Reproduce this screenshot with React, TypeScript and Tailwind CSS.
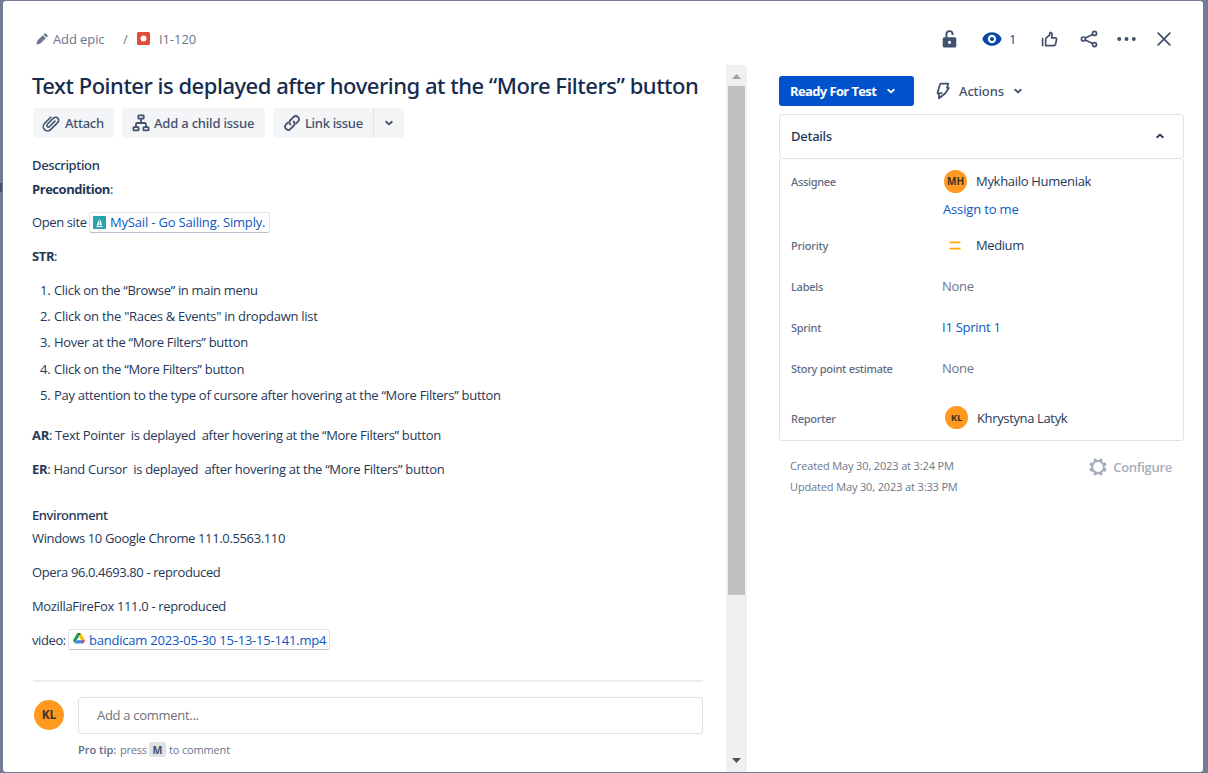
import type { ReactNode } from "react";

const steps = [
  { text: "Click on the “Browse” in main menu", track: "tracking-[-0.33px]" },
  { text: "Click on the \"Races & Events\" in dropdawn list", track: "tracking-[-0.27px]" },
  { text: "Hover at the “More Filters” button", track: "tracking-[-0.3px]" },
  { text: "Click on the “More Filters” button", track: "tracking-[-0.27px]" },
  { text: "Pay attention to the type of cursore after hovering at the “More Filters” button", track: "tracking-[-0.3px]" },
];

function Chevron({ up = false, className = "" }: { up?: boolean; className?: string }) {
  return (
    <svg width="10" height="10" viewBox="0 0 10 10" fill="none" stroke="currentColor" strokeWidth="1.9" strokeLinecap="round" strokeLinejoin="round" className={className}>
      <path d={up ? "M2.200 6.200 5 3.600l2.800 2.600" : "M2.200 3.800 5 6.400l2.800-2.600"} />
    </svg>
  );
}

function PencilIcon() {
  return (
    <svg width="12" height="12" viewBox="0 0 12 12" fill="#6b778c">
      <path d="M1.400 7.600 6.800 2.200l3 3-5.400 5.400-3.400.8a.35.35 0 0 1-.5-.5zM7.500 1.500l.8-.8a1.300 1.300 0 0 1 1.800 0l1.200 1.200a1.300 1.300 0 0 1 0 1.800l-.8.8z" />
    </svg>
  );
}

function BugIcon() {
  return (
    <svg width="13" height="13" viewBox="0 0 13 13">
      <rect width="13" height="13" rx="1.5" fill="#e04b3a" />
      <circle cx="6.5" cy="6.5" r="3" fill="#fff" />
    </svg>
  );
}

function ClipIcon() {
  return (
    <svg width="18" height="18" viewBox="0 0 18 18" fill="none" stroke="currentColor" strokeWidth="1.6" strokeLinecap="round">
      <path d="M12.900 7.100 7.500 12.500a1.500 1.500 0 0 1-2.200-2.200l6.200-6.200a3 3 0 0 1 4.300 4.300l-7.200 7.200a4.300 4.300 0 0 1-6.100-6.100l6.300-6.300" />
    </svg>
  );
}

function TreeIcon() {
  return (
    <svg width="18" height="18" viewBox="0 0 18 18" fill="none" stroke="currentColor" strokeWidth="1.8" strokeLinejoin="round">
      <rect x="6.300" y="1.400" width="5.400" height="3.200" rx=".6" />
      <rect x="1.400" y="13.200" width="5.200" height="3.200" rx=".6" />
      <rect x="11.400" y="13.200" width="5.200" height="3.200" rx=".6" />
      <path d="M9 4.600V9M4 13V10.200Q4 9 5.200 9h7.600Q14 9 14 10.200V13" />
    </svg>
  );
}

function LinkIcon() {
  return (
    <svg width="18" height="18" viewBox="0 0 18 18" fill="none" stroke="currentColor" strokeWidth="1.8" strokeLinecap="round">
      <path d="M7.400 10.600a3.300 3.300 0 0 1 .1-4.600l3.200-3.200a3.200 3.200 0 0 1 4.500 4.500l-2 2" />
      <path d="M10.600 7.400a3.300 3.300 0 0 1-.1 4.600l-3.200 3.200a3.200 3.200 0 0 1-4.500-4.500l2-2" />
    </svg>
  );
}

function UnlockIcon() {
  return (
    <svg width="15" height="18" viewBox="0 0 15 18">
      <path d="M4.400 8V4.400a3.100 3.100 0 0 1 6.200-.3v.8" fill="none" stroke="#42526e" strokeWidth="1.900" />
      <path fillRule="evenodd" fill="#42526e" d="M2.200 7.200h10.600a1.500 1.500 0 0 1 1.500 1.500v7.200a1.500 1.500 0 0 1-1.500 1.500H2.200a1.500 1.500 0 0 1-1.500-1.500V8.700a1.500 1.500 0 0 1 1.500-1.500zM7.500 10.700a1.600 1.600 0 1 0 0 3.200 1.600 1.600 0 0 0 0-3.200z" />
    </svg>
  );
}

function EyeIcon() {
  return (
    <svg width="20" height="14" viewBox="0 0 20 14">
      <path d="M10 .2C5 .2 1.900 3.500.7 6a2 2 0 0 0 0 2C1.900 10.500 5 13.800 10 13.800S18.100 10.500 19.300 8a2 2 0 0 0 0-2C18.100 3.500 15 .2 10 .2z" fill="#0747a6" />
      <circle cx="10" cy="7" r="3.100" fill="none" stroke="#fff" strokeWidth="2.100" />
    </svg>
  );
}

function ThumbIcon() {
  return (
    <svg width="17" height="17" viewBox="0 0 17 17" fill="none" stroke="#42526e" strokeWidth="1.700" strokeLinecap="round" strokeLinejoin="round">
      <path d="M1.600 7.700v7M4.700 14.600V8.200q0-.8.6-1.300L8.600 4l.2-1.600Q9 1.300 9.900 1.500q1.300.3 1.200 2L10.600 6.800h3.600q1.600 0 1.300 1.600l-.9 4.700q-.3 1.500-1.800 1.500z" />
    </svg>
  );
}

function ShareIcon() {
  return (
    <svg width="18" height="18" viewBox="0 0 18 18" fill="none" stroke="#42526e" strokeWidth="1.700">
      <circle cx="3.400" cy="9" r="2" />
      <circle cx="14.500" cy="3.400" r="2" />
      <circle cx="14.500" cy="14.600" r="2" />
      <path d="m5.300 8.100 7.300-3.700M5.300 9.900l7.300 3.700" />
    </svg>
  );
}

function BoltIcon() {
  return (
    <svg width="14" height="18" viewBox="0 0 14 18" fill="none" stroke="#42526e" strokeWidth="1.800" strokeLinejoin="round">
      <path d="M5.200 1.700h7.100L11 5.700l1.700.3L9.400 11.300 3 16.300V11.600L1.500 11.300 3.600 3.400Q4 1.700 5.200 1.700zM3 11.600l3.300-.8" />
    </svg>
  );
}

function GearIcon() {
  const teeth = [22.5, 67.5, 112.5, 157.5, 202.5, 247.5, 292.5, 337.5];
  return (
    <svg width="18" height="18" viewBox="0 0 18 18">
      <circle cx="9" cy="9" r="5.900" fill="none" stroke="#a5adba" strokeWidth="2" />
      {teeth.map((a) => (
        <rect key={a} x="7.300" y=".3" width="3.400" height="2.800" rx=".7" fill="#a5adba" transform={`rotate(${a} 9 9)`} />
      ))}
    </svg>
  );
}

function SailIcon() {
  return (
    <svg width="13" height="13" viewBox="0 0 13 13">
      <rect width="13" height="13" fill="#2ba3ac" />
      <path d="M6.300 1.500v7.700H3.600Q5.900 5.500 6.300 1.500zM7 3.600q1.700 2.900 1.900 5.600H7zM2.800 10h7.400L9 11.100H4z" fill="#fff" />
    </svg>
  );
}

function DriveIcon() {
  return (
    <svg width="12" height="11" viewBox="0 0 12 11">
      <path d="M4.200 0 6 3.200 1.900 10.500 0 7.300z" fill="#1f9d58" />
      <path d="M4.200 0h3.600L12 7.300H8.200z" fill="#fbbc04" />
      <path d="M3.700 7.300H12l-1.900 3.200H1.900z" fill="#4285f4" />
      <path d="M8.200 7.300H12l-1.900 3.200z" fill="#ea4335" />
      <path d="M4.200 0h3.600L6 3.200z" fill="#188038" />
    </svg>
  );
}

function FieldRow({ label, track, className, children }: { label: string; track: string; className: string; children: ReactNode }) {
  return (
    <div className={`flex items-center ${className}`}>
      <div className={`w-[151px] shrink-0 pt-px font-['Noto_Sans'] text-[11px] leading-[20px] font-medium text-[#5e6c84] ${track}`}>{label}</div>
      {children}
    </div>
  );
}

function TopBar() {
  return (
    <header className="flex h-[64px] shrink-0 items-center pt-[12px] pl-[33px] text-[#6b778c]">
      <PencilIcon />
      <span className="ml-[5px] w-[70px] tracking-[-0.1px]">Add epic</span>
      <span className="w-[14px]">/</span>
      <span className="mb-[2px] flex"><BugIcon /></span>
      <span className="ml-[9px] tracking-[-0.05px]">I1-120</span>
      <div className="ml-auto flex items-center pr-[32px]">
        <UnlockIcon />
        <span className="ml-[25px] flex"><EyeIcon /></span>
        <span className="ml-[7px] w-[7px] text-[#0747a6]">1</span>
        <span className="ml-[25px] flex"><ThumbIcon /></span>
        <span className="ml-[22px] flex"><ShareIcon /></span>
        <svg className="ml-[19px]" width="19" height="4" viewBox="0 0 19 4" fill="#42526e">
          <circle cx="2.200" cy="2" r="2" />
          <circle cx="9.500" cy="2" r="2" />
          <circle cx="16.800" cy="2" r="2" />
        </svg>
        <svg className="ml-[21px]" width="14" height="14" viewBox="0 0 14 14" stroke="#42526e" strokeWidth="1.800" strokeLinecap="round">
          <path d="m1.200 1.200 11.600 11.600M12.800 1.200 1.200 12.800" />
        </svg>
      </div>
    </header>
  );
}

function IssueBody() {
  return (
    <main className="flex w-[671px] shrink-0 flex-col pt-[5px]">
      <h1 className="h-[30px] font-['Noto_Sans'] text-[22px] leading-[30px] font-medium tracking-[-0.48px] whitespace-nowrap text-[#172b4d]">
        Text Pointer is deplayed after hovering at the “More Filters” button
      </h1>
      <div className="mt-[8px] flex h-[30px] gap-[8px] pl-px font-['Noto_Sans'] font-medium text-[#42526e]">
        <button className="flex w-[81px] items-center rounded-[3px] bg-[#f4f5f7] pl-[9px]">
          <ClipIcon />
          <span className="ml-[5px] tracking-[-0.27px]">Attach</span>
        </button>
        <button className="flex w-[143px] items-center rounded-[3px] bg-[#f4f5f7] pl-[10px]">
          <TreeIcon />
          <span className="ml-[4px] tracking-[-0.2px] whitespace-nowrap">Add a child issue</span>
        </button>
        <div className="flex">
          <button className="flex w-[100px] items-center rounded-l-[3px] bg-[#f4f5f7] pl-[10px]">
            <LinkIcon />
            <span className="ml-[4px] tracking-[-0.32px]">Link issue</span>
          </button>
          <button className="flex w-[31px] items-center justify-center rounded-r-[3px] border-l border-[#dfe1e6] bg-[#f4f5f7]">
            <Chevron />
          </button>
        </div>
      </div>

      <h2 className="mt-[17px] font-['Noto_Sans'] font-medium tracking-[-0.35px]">Description</h2>
      <p className="mt-[4px]"><b className="tracking-[-0.46px]">Precondition</b>:</p>
      <p className="mt-[13px] flex h-[20px] items-center">
        <span className="w-[57px] tracking-[-0.4px] whitespace-nowrap">Open site</span>
        <a className="flex h-[21px] w-[181px] items-center rounded-[3px] border border-[#dfe1e6] border-b-[#b8bfcc] pl-[3px] text-[#0b57c4]">
          <SailIcon />
          <span className="ml-[4px] tracking-[-0.18px] whitespace-nowrap">MySail - Go Sailing. Simply.</span>
        </a>
      </p>
      <p className="mt-[14px]"><b className="tracking-[-0.4px]">STR</b>:</p>
      <ol className="mt-[11px]">
        {steps.map((step, i) => (
          <li key={step.text} className="flex h-[26.2px] items-center pl-[8px]">
            <span className="w-[14px] tracking-[-0.3px]">{i + 1}.</span>
            <span className={`whitespace-nowrap ${step.track}`}>{step.text}</span>
          </li>
        ))}
      </ol>
      <p className="mt-[17px] tracking-[-0.32px] whitespace-pre"><b>AR</b>: Text Pointer  is deplayed  after hovering at the “More Filters” button</p>
      <p className="mt-[14px] tracking-[-0.3px] whitespace-pre"><b>ER</b>: Hand Cursor  is deplayed  after hovering at the “More Filters” button</p>

      <h2 className="mt-[26px] font-['Noto_Sans'] font-medium tracking-[-0.4px]">Environment</h2>
      <p className="mt-[3px] tracking-[-0.36px]">Windows 10 Google Chrome 111.0.5563.110</p>
      <p className="mt-[14px] tracking-[-0.39px]">Opera 96.0.4693.80 - reproduced</p>
      <p className="mt-[14px] tracking-[-0.34px]">MozillaFireFox 111.0 - reproduced</p>
      <p className="mt-[14px] flex h-[20px] items-center">
        <span className="w-[36px] tracking-[-0.4px]">video:</span>
        <a className="flex h-[21px] w-[262px] items-center rounded-[3px] border border-[#dfe1e6] border-b-[#b8bfcc] pl-[4px] text-[#0b57c4]">
          <span className="mb-[3px] flex"><DriveIcon /></span>
          <span className="ml-[4px] tracking-[-0.21px] whitespace-nowrap">bandicam 2023-05-30 15-13-15-141.mp4</span>
        </a>
      </p>

      <div className="mt-[30px] ml-px h-[2px] shrink-0 bg-[#ebecf0]" />
      <div className="mt-[15px] flex h-[37px] shrink-0 items-center pl-[2px]">
        <span className="flex size-[30px] items-center justify-center rounded-full bg-[#ff991f] text-[12px] font-bold tracking-[-0.2px] text-[#3a3328]">KL</span>
        <div className="ml-[14px] flex h-full flex-1 items-center rounded-[3px] border border-[#dfe1e6] pl-[18px] tracking-[-0.29px] text-[#6f7278]">
          Add a comment...
        </div>
      </div>
      <p className="mt-[6px] flex items-center pl-[46px] text-[11px] text-[#6b778c]">
        <b className="w-[42px] font-semibold text-[#5e6c84]">Pro tip:</b>
        <span className="w-[29px] tracking-[-0.25px]">press</span>
        <kbd className="flex h-[15px] w-[17px] items-center justify-center rounded-[3px] bg-[#dfe1e6] font-['Open_Sans',sans-serif] text-[10.500px] font-bold text-[#42526e]">M</kbd>
        <span className="ml-[3px] tracking-[-0.16px]">to comment</span>
      </p>
    </main>
  );
}

function Scrollbar() {
  return (
    <div className="ml-[23px] flex w-[21px] shrink-0 flex-col items-center bg-[#f0f0f0]">
      <svg width="21" height="21" viewBox="0 0 21 21"><path d="M6 14h9l-4.500-5z" fill="#a0a0a0" /></svg>
      <div className="h-[509px] w-[17px] bg-[#c1c1c1]" />
      <svg className="mt-auto" width="21" height="21" viewBox="0 0 21 21"><path d="M6 7h9l-4.500 5z" fill="#505050" /></svg>
    </div>
  );
}

function DetailsPanel() {
  return (
    <aside className="ml-[32px] flex w-[405px] flex-col pt-[11px]">
      <div className="flex h-[30px] items-center">
        <button className="flex h-full w-[135px] items-center rounded-[3px] bg-[#0052cc] pl-[11px] font-bold tracking-[-0.62px] text-white">
          <span className="w-[86px] whitespace-nowrap">Ready For Test</span>
          <Chevron className="ml-[10px]" />
        </button>
        <span className="ml-[22px] flex"><BoltIcon /></span>
        <span className="ml-[9px] w-[45px] font-['Noto_Sans'] font-medium tracking-[-0.14px] text-[#42526e]">Actions</span>
        <Chevron className="ml-[9px] text-[#42526e]" />
      </div>

      <section className="mt-[8px] flex h-[327px] flex-col">
        <div className="flex h-[45px] shrink-0 items-center justify-between rounded-[4px] border border-[#dfe1e6] pr-[18px] pb-[2px] pl-[11px]">
          <h2 className="font-['Noto_Sans'] font-medium tracking-[-0.27px]">Details</h2>
          <Chevron up />
        </div>
        <div className="flex flex-1 flex-col rounded-b-[4px] border-x border-b border-[#dfe1e6] pl-[11px]">
          <FieldRow label="Assignee" track="tracking-[-0.3px]" className="mt-[11px] h-[22px]">
            <span className="ml-[2px] flex size-[23px] items-center justify-center rounded-full bg-[#ff991f] text-[10px] font-bold text-[#3a3328]">MH</span>
            <span className="ml-[9px] tracking-[-0.3px]">Mykhailo Humeniak</span>
          </FieldRow>
          <a className="mt-[7px] pl-[152px] tracking-[-0.16px] text-[#0b57c4]">Assign to me</a>
          <FieldRow label="Priority" track="tracking-[-0.2px]" className="mt-[16px] h-[20px]">
            <svg className="ml-[7px]" width="12" height="9" viewBox="0 0 12 9" stroke="#ffab00" strokeWidth="1.700" strokeLinecap="round">
              <path d="M1.200 1.300h9.600M1.200 7.700h9.600" />
            </svg>
            <span className="ml-[15px] tracking-[-0.41px]">Medium</span>
          </FieldRow>
          <FieldRow label="Labels" track="tracking-[-0.25px]" className="mt-[21px] h-[20px]">
            <span className="tracking-[-0.27px] text-[#6b778c]">None</span>
          </FieldRow>
          <FieldRow label="Sprint" track="tracking-[-0.25px]" className="mt-[21px] h-[20px]">
            <span className="tracking-[-0.25px] text-[#0b57c4]">I1 Sprint 1</span>
          </FieldRow>
          <FieldRow label="Story point estimate" track="tracking-[-0.26px]" className="mt-[21px] h-[20px]">
            <span className="tracking-[-0.27px] text-[#6b778c]">None</span>
          </FieldRow>
          <FieldRow label="Reporter" track="tracking-[-0.25px]" className="mt-[29px] h-[22px]">
            <span className="mb-px ml-[3px] flex size-[23px] items-center justify-center rounded-full bg-[#ff991f] text-[9.500px] font-bold text-[#3a3328]">KL</span>
            <span className="ml-[9px] tracking-[-0.36px]">Khrystyna Latyk</span>
          </FieldRow>
        </div>
      </section>

      <div className="flex justify-between pt-[14px] pr-[12px] pl-[11px] text-[#6b778c]">
        <div className="text-[11px] leading-[21px] tracking-[-0.14px]">
          <p>Created May 30, 2023 at 3:24 PM</p>
          <p>Updated May 30, 2023 at 3:33 PM</p>
        </div>
        <button className="mt-[2px] flex h-[20px] items-center font-semibold tracking-[-0.28px] text-[#a5adba]">
          <GearIcon />
          <span className="ml-[6px]">Configure</span>
        </button>
      </div>
    </aside>
  );
}

export default function App() {
  return (
    <div className="flex h-[773px] w-[1208px] overflow-hidden bg-[#727c93] pt-px pb-px font-['Open_Sans','Noto_Sans',sans-serif] text-[13px] leading-[20px] text-[#253858]">
      <div className="w-[3px] shrink-0 pt-[182px]">
        <div className="h-[9px] w-[2px] bg-[#4a5268]" />
      </div>
      <div className="flex w-[1200px] flex-col rounded-[3px] bg-white">
        <TopBar />
        <div className="flex min-h-0 flex-1 pl-[29px]">
          <IssueBody />
          <Scrollbar />
          <DetailsPanel />
        </div>
      </div>
    </div>
  );
}
